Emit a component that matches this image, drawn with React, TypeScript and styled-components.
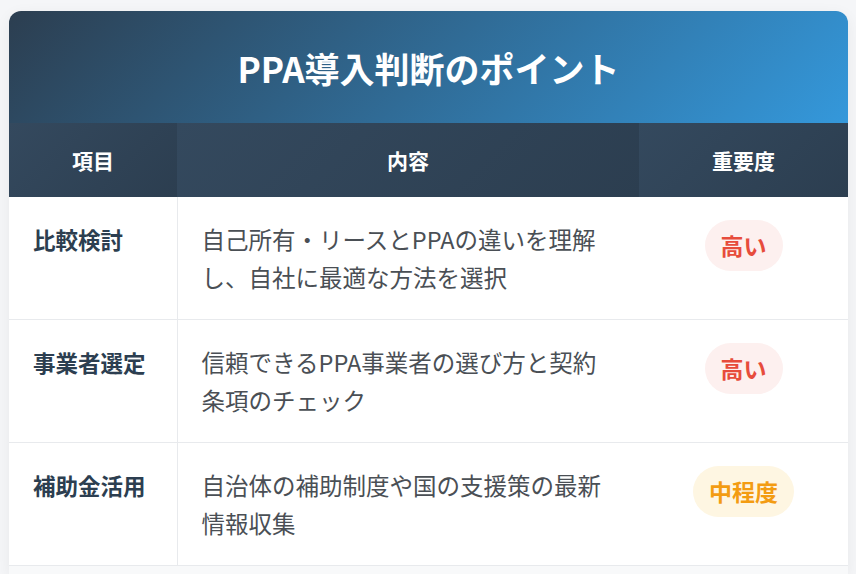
import styled, { createGlobalStyle } from 'styled-components';

type Level = 'high' | 'mid';

const rows: { item: string; content: string; level: Level; label: string }[] = [
  {
    item: '比較検討',
    content: '自己所有・リースとPPAの違いを理解し、自社に最適な方法を選択',
    level: 'high',
    label: '高い',
  },
  {
    item: '事業者選定',
    content: '信頼できるPPA事業者の選び方と契約条項のチェック',
    level: 'high',
    label: '高い',
  },
  {
    item: '補助金活用',
    content: '自治体の補助制度や国の支援策の最新情報収集',
    level: 'mid',
    label: '中程度',
  },
];

export default function App(): JSX.Element {
  return (
    <>
      <GlobalStyle />
      <Page_div>
        <Card_section>
          <Title_h1>PPA導入判断のポイント</Title_h1>
          <Table_table>
            <colgroup>
              <col style={{ width: 168 }} />
              <col style={{ width: 462 }} />
              <col style={{ width: 209 }} />
            </colgroup>
            <thead>
              <tr>
                <Head_th>項目</Head_th>
                <Head_th>内容</Head_th>
                <Head_th>重要度</Head_th>
              </tr>
            </thead>
            <tbody>
              {rows.map((row) => (
                <tr key={row.item}>
                  <Item_td>{row.item}</Item_td>
                  <Content_td>{row.content}</Content_td>
                  <Badge_td>
                    <Badge_span $level={row.level}>{row.label}</Badge_span>
                  </Badge_td>
                </tr>
              ))}
            </tbody>
          </Table_table>
          {/* Footer */}
          <Footer_div />
        </Card_section>
      </Page_div>
    </>
  );
}
// --------------- Styled ---------------
const GlobalStyle = createGlobalStyle`
  body {
    margin: 0;
    background: #f5f6f8;
    font-family: "Noto Sans CJK JP", "Noto Sans", sans-serif;
  }
`;

const Page_div = styled.div`
  padding: 11px 8px 0 9px;
`;

const Card_section = styled.section`
  width: 839px;
  background: #fff;
  border-radius: 12px 12px 0 0;
  overflow: hidden;
  box-shadow: 0 4px 16px rgba(0, 0, 0, 0.06);
`;

const Title_h1 = styled.h1`
  margin: 0;
  height: 112px;
  display: flex;
  align-items: center;
  justify-content: center;
  color: #fff;
  font-size: 35px;
  font-weight: 700;
  background: linear-gradient(135deg, #2c3e50 0%, #3498db 100%);
`;

const Table_table = styled.table`
  width: 100%;
  border-collapse: collapse;
  table-layout: fixed;
`;

const Head_th = styled.th`
  height: 74px;
  padding: 0;
  color: #fff;
  font-size: 21px;
  font-weight: 700;
  text-align: center;
  background: linear-gradient(135deg, #34495e 0%, #2c3e50 100%);
`;

const Cell_td = styled.td`
  vertical-align: top;
  padding: 24px 24px 23px;
  border-bottom: 1px solid #e8eaed;
  line-height: 37.5px;
`;

const Item_td = styled(Cell_td)`
  color: #2c3e50;
  font-size: 22.5px;
  font-weight: 700;
  border-right: 1px solid #e8eaed;
`;

const Content_td = styled(Cell_td)`
  color: #4a4f55;
  font-size: 23.5px;
  padding-right: 36px;
`;

const Badge_td = styled(Cell_td)`
  text-align: center;
  padding-top: 23px;
`;

const Badge_span = styled.span<{ $level: Level }>`
  display: inline-block;
  padding: 11px 16px;
  border-radius: 26px;
  font-size: 23px;
  font-weight: 700;
  line-height: 29px;
  color: ${({ $level }) => ($level === 'high' ? '#e74c3c' : '#f39c12')};
  background: ${({ $level }) => ($level === 'high' ? '#fdf0ef' : '#fef6e2')};
`;

const Footer_div = styled.div`
  height: 8px;
  background: #f8f9fa;
`;
